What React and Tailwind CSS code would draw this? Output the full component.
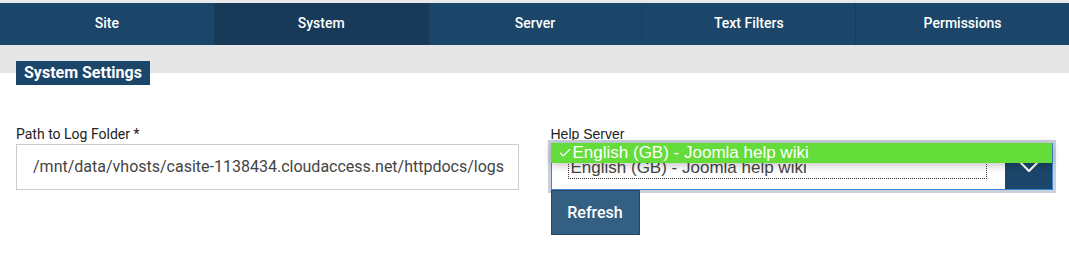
import { Check } from 'lucide-react'

const TABS = ['Site', 'System', 'Server', 'Text Filters', 'Permissions']

function Tabs() {
  return (
    <div className="grid grid-cols-5 h-[42px] bg-[#1c4669]">
      {TABS.map((t, i) => (
        <div
          key={t}
          className={
            'flex items-center justify-center text-white text-[14px] font-medium pb-[1px] ' +
            (i > 0 ? 'border-l border-[#183e5f] ' : '') +
            (t === 'System' ? 'bg-[#173a59]' : '')
          }
        >
          {t}
        </div>
      ))}
    </div>
  )
}

function Chevron() {
  return (
    <svg width="20" height="11" viewBox="0 0 20 11" fill="none">
      <path d="M1 1l9 9 9-9" stroke="#fff" strokeWidth="2.2" />
    </svg>
  )
}

export default function App() {
  return (
    <div className="w-[1069px] h-[266px] bg-white overflow-hidden font-['Roboto',sans-serif]">
      <div className="h-[3px] bg-[#e9e9e9]" />
      <Tabs />

      {/* heading band */}
      <div className="pt-[16px] px-4 bg-[linear-gradient(to_bottom,#e6e6e6_28px,#ffffff_28px)]">
        <span className="inline-block h-[24px] leading-[24px] px-2 bg-[#1c4669] text-white text-[16px] font-bold">
          System Settings
        </span>
      </div>

      <div className="grid grid-cols-2 gap-8 px-4 pt-[39px]">
        {/* Left column */}
        <div>
          <label className="block text-[14px] leading-[20px] text-[#222]">
            Path to Log Folder *
          </label>
          <div className="h-[46px] border border-[#cccccc] flex items-center pl-[16px] pr-[13px] overflow-hidden">
            <span className="whitespace-nowrap overflow-hidden text-[16px] text-[#444]">
              /mnt/data/vhosts/casite-1138434.cloudaccess.net/httpdocs/logs
            </span>
          </div>
        </div>

        {/* Right column */}
        <div>
          <label className="block text-[14px] leading-[20px] text-[#222] font-['Liberation_Sans',sans-serif]">
            Help Server
          </label>
          <div className="relative -mt-[1px]">
            <div className="h-[47px] border border-[#3b87d4] bg-white flex shadow-[0_0_0_3px_#c9d1dc]">
              <div className="flex-1 pl-[16px] pr-[18px] pt-[10px]">
                <div className="w-full h-[25px] border border-dotted border-[#333] flex items-end">
                  <span className="text-[17px] leading-[20px] text-[#444] font-['Liberation_Sans',sans-serif] pl-[2px]">
                    English (GB) - Joomla help wiki
                  </span>
                </div>
              </div>
              <div className="w-[47px] bg-[#1c4669] flex items-start justify-center pt-[17px]">
                <Chevron />
              </div>
            </div>
            {/* open dropdown option */}
            <div className="absolute left-0 right-[1px] top-0 h-[20px] bg-[#64dc3a] shadow-[0_2px_8px_rgba(0,0,0,0.25)] flex items-center pl-[7px] text-white text-[17px] font-['Liberation_Sans',sans-serif]">
              <Check size={14} strokeWidth={2} className="mr-[1px]" />
              English (GB) - Joomla help wiki
            </div>
          </div>
          <button className="relative w-[89px] h-[45px] bg-[#325f82] border border-[#27455e] text-white text-[16px] font-medium">
            Refresh
          </button>
        </div>
      </div>
    </div>
  )
}
